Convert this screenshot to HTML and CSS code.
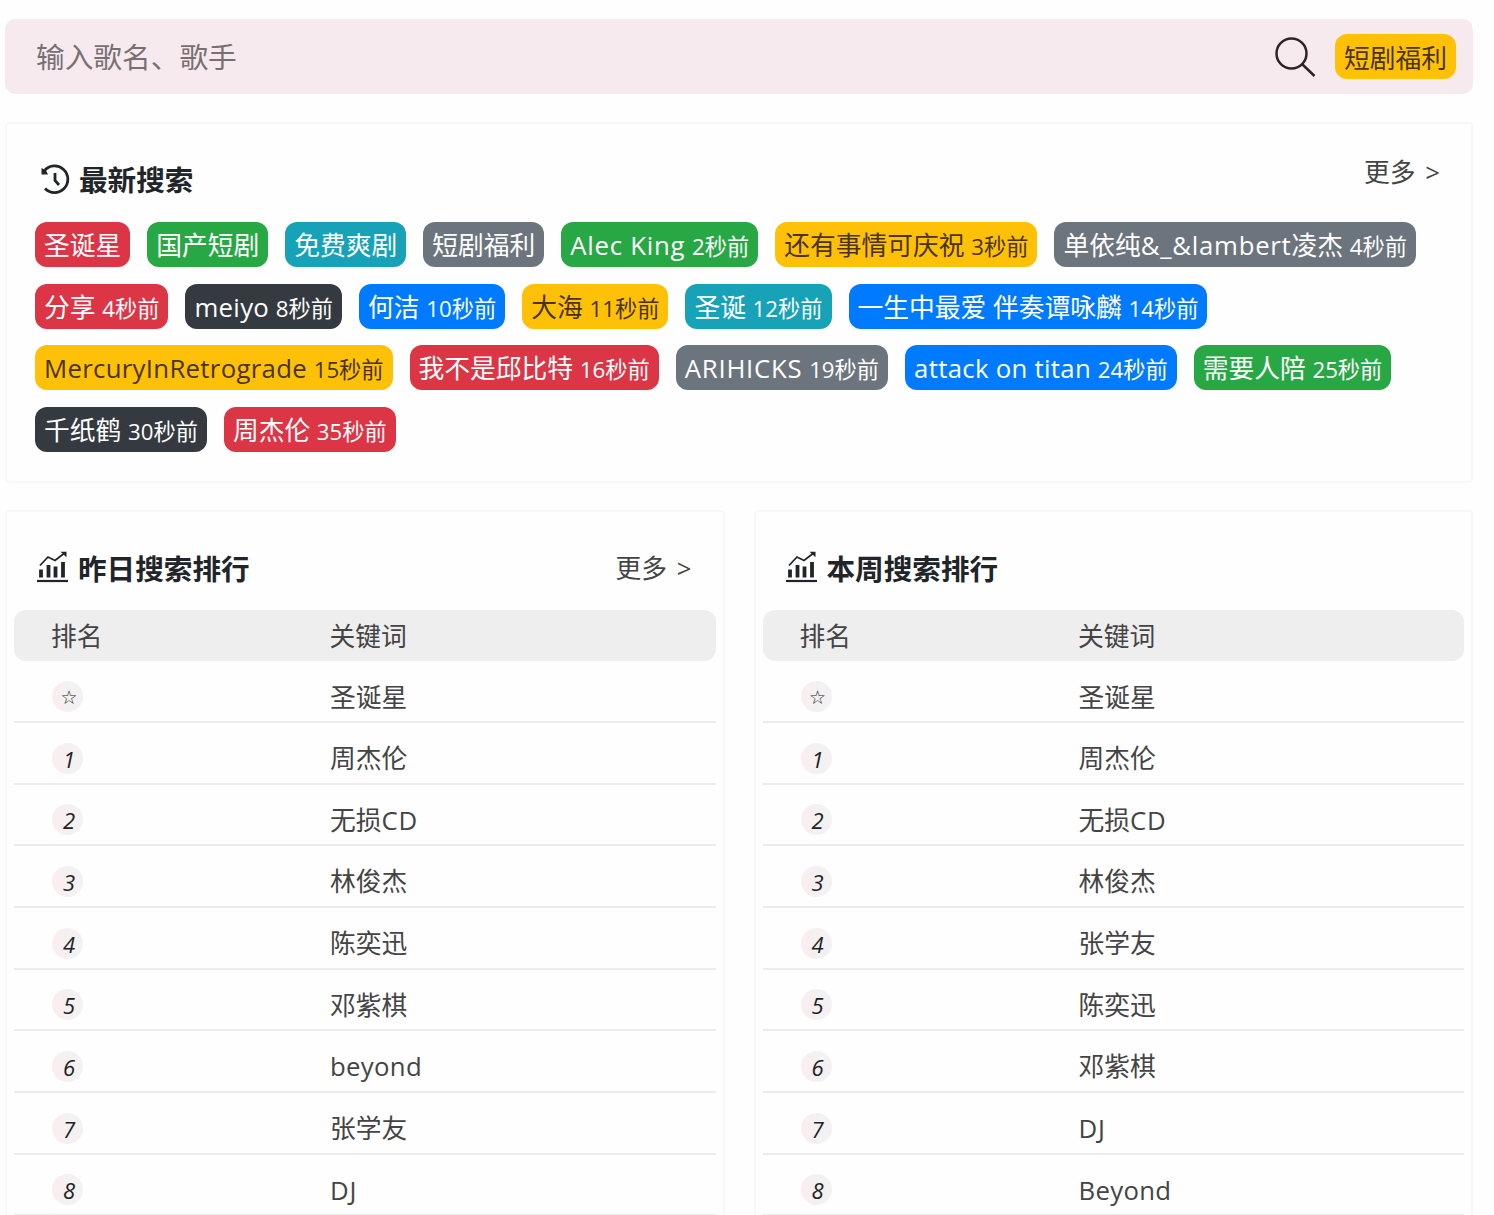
FILE: index.html
```html
<!DOCTYPE html>
<html lang="zh-CN">

<head>
  <meta charset="UTF-8" />
  <meta name="viewport" content="width=device-width, initial-scale=1.0" />
  <title>歌曲搜索</title>
  <link rel="stylesheet" href="styles.css">
</head>

<body>
  <svg class="sprite">
    <symbol id="icon-chart" viewBox="0 0 32 32">
      <path d="M0 30h31" stroke="currentColor" stroke-width="2.200" fill="none" />
      <path d="M4 18.500v8M11.500 14v12.500M18.500 15.500v11M26 11v15.500" stroke="currentColor" stroke-width="3.800" fill="none" />
      <path d="M3 14.500l8-8.500 7 3.500L27 2.500" stroke="currentColor" stroke-width="1.800" fill="none" />
      <path d="M23.500 0.700h6v5.500z" fill="currentColor" />
    </symbol>
  </svg>

  <form class="search">
    <input class="search-input" type="text" placeholder="输入歌名、歌手">
    <svg class="search-icon" viewBox="0 0 42 42">
      <circle cx="17.500" cy="17.500" r="15" />
      <path d="M28 28l12.500 12" />
    </svg>
    <a class="tag warning">短剧福利</a>
  </form>

  <section class="card recent">
    <div class="card-head">
      <h2 class="title">
        <svg class="icon-history" viewBox="0 0 32 32">
          <path d="M5.500 7.500A13.300 13.300 0 1 1 6 25.500" />
          <path d="M16 10v7.500l4 4.500" />
          <path class="arrow" d="M2.500 5v6.500h6.500l-2-4z" />
        </svg>
        最新搜索
      </h2>
      <a class="more">更多 &gt;</a>
    </div>
    <div class="tags">
      <a class="tag danger">圣诞星</a>
      <a class="tag success">国产短剧</a>
      <a class="tag info">免费爽剧</a>
      <a class="tag secondary">短剧福利</a>
      <a class="tag success"><span class="wide">Alec King</span> <small>2秒前</small></a>
      <a class="tag warning">还有事情可庆祝 <small>3秒前</small></a>
      <a class="tag secondary">单依纯<span class="wide">&amp;_&amp;lambert</span>凌杰 <small>4秒前</small></a>
      <a class="tag danger">分享 <small>4秒前</small></a>
      <a class="tag dark"><span class="en">meiyo</span> <small>8秒前</small></a>
      <a class="tag primary">何洁 <small>10秒前</small></a>
      <a class="tag warning">大海 <small>11秒前</small></a>
      <a class="tag info">圣诞 <small>12秒前</small></a>
      <a class="tag primary">一生中最爱 伴奏谭咏麟 <small>14秒前</small></a>
      <a class="tag warning"><span class="en">MercuryInRetrograde</span> <small>15秒前</small></a>
      <a class="tag danger">我不是邱比特 <small>16秒前</small></a>
      <a class="tag secondary"><span class="wide">ARIHICKS</span> <small>19秒前</small></a>
      <a class="tag primary"><span class="en">attack on titan</span> <small>24秒前</small></a>
      <a class="tag success">需要人陪 <small>25秒前</small></a>
      <a class="tag dark">千纸鹤 <small>30秒前</small></a>
      <a class="tag danger">周杰伦 <small>35秒前</small></a>
    </div>
  </section>

  <div class="ranks">
    <section class="card rank">
      <div class="card-head">
        <h2 class="title"><svg class="icon-chart"><use href="#icon-chart" /></svg>昨日搜索排行</h2>
        <a class="more">更多 &gt;</a>
      </div>
      <div class="row head"><span>排名</span><span>关键词</span></div>
      <div class="row"><i class="num star">☆</i><span>圣诞星</span></div>
      <div class="row"><i class="num">1</i><span>周杰伦</span></div>
      <div class="row"><i class="num">2</i><span>无损<span class="wide">CD</span></span></div>
      <div class="row"><i class="num">3</i><span>林俊杰</span></div>
      <div class="row"><i class="num">4</i><span>陈奕迅</span></div>
      <div class="row"><i class="num">5</i><span>邓紫棋</span></div>
      <div class="row"><i class="num">6</i><span class="en">beyond</span></div>
      <div class="row"><i class="num">7</i><span>张学友</span></div>
      <div class="row"><i class="num">8</i><span class="wide">DJ</span></div>
    </section>

    <section class="card rank">
      <div class="card-head">
        <h2 class="title"><svg class="icon-chart"><use href="#icon-chart" /></svg>本周搜索排行</h2>
      </div>
      <div class="row head"><span>排名</span><span>关键词</span></div>
      <div class="row"><i class="num star">☆</i><span>圣诞星</span></div>
      <div class="row"><i class="num">1</i><span>周杰伦</span></div>
      <div class="row"><i class="num">2</i><span>无损<span class="wide">CD</span></span></div>
      <div class="row"><i class="num">3</i><span>林俊杰</span></div>
      <div class="row"><i class="num">4</i><span>张学友</span></div>
      <div class="row"><i class="num">5</i><span>陈奕迅</span></div>
      <div class="row"><i class="num">6</i><span>邓紫棋</span></div>
      <div class="row"><i class="num">7</i><span class="wide">DJ</span></div>
      <div class="row"><i class="num">8</i><span class="en">Beyond</span></div>
    </section>
  </div>
</body>

</html>
```
FILE: styles.css
```css
* {
  box-sizing: border-box;
  margin: 0;
  padding: 0;
}

body {
  height: 1215px;
  padding: 19px 21px 0 5px;
  overflow: hidden;
  background: #fefefe;
  color: #444;
  font-family: "Open Sans", "Noto Sans CJK SC", sans-serif;
  font-size: 25.75px;
  line-height: 36px;
}

.sprite {
  display: none;
}

.en {
  letter-spacing: 0.3px;
}

.wide {
  letter-spacing: 0.75px;
}

/* 搜索框 */
.search {
  display: flex;
  align-items: center;
  height: 75px;
  padding: 0 17px 0 31px;
  border-radius: 10px;
  background: #f7eaef;
}

.search-input {
  flex: 1;
  min-width: 0;
  height: 60px;
  border: none;
  outline: none;
  background: none;
  font-family: inherit;
  font-size: 28.7px;
}

.search-input::placeholder {
  color: #777073;
}

.search-icon {
  width: 42px;
  height: 42px;
  margin-right: 19px;
  fill: none;
  stroke: #2b2529;
  stroke-width: 2.5;
}

.search .tag {
  padding-top: 2px;
}

/* 卡片 */
.card {
  border: 2px solid #f8f8f8;
  border-radius: 4px;
  background: #fefefe;
}

.card-head {
  display: flex;
  justify-content: space-between;
}

.title {
  display: flex;
  align-items: center;
  color: #212529;
  font-size: 28.6px;
  font-weight: 700;
}

.recent {
  height: 361px;
  margin-top: 28px;
  padding: 30px 31px 0 28px;
}

.recent .title {
  margin-top: 8px;
}

.icon-history {
  width: 32px;
  height: 32px;
  margin: -2px 8px 0 4px;
  fill: none;
  stroke: #212529;
  stroke-width: 2.8;
}

.icon-history .arrow {
  fill: #212529;
  stroke: none;
}

.icon-chart {
  width: 32px;
  height: 32px;
  margin: -5px 9px 0 -1px;
}

.more {
  word-spacing: 3px;
  white-space: nowrap;
}

/* 标签 */
.tags {
  display: flex;
  flex-wrap: wrap;
  gap: 16.6px 17px;
  margin: 24px -16px 0 0;
}

.tag {
  height: 45px;
  padding: 1px 9px 0;
  border-radius: 12px;
  color: #fff;
  line-height: 45px;
  white-space: nowrap;
}

.tag small {
  font-size: 22.25px;
}

.primary {
  background: #007bff;
}

.secondary {
  background: #6c757d;
}

.success {
  background: #28a745;
}

.danger {
  background: #dc3545;
}

.warning {
  background: #ffc107;
  color: #4a3310;
}

.info {
  background: #17a2b8;
}

.dark {
  background: #343a40;
}

/* 排行榜 */
.ranks {
  display: flex;
  gap: 29px;
  margin-top: 27px;
}

.rank {
  flex: 1;
  height: 760px;
  padding: 38px 7px 0;
}

.rank .card-head {
  height: 60px;
  padding: 0 24px;
}

.rank .title {
  height: 38px;
}

.row {
  display: flex;
  align-items: center;
  height: 61.65px;
  padding: 10.5px 37px 0;
  border-bottom: 2px solid #ececec;
}

.row > :first-child {
  margin-right: 247px;
}

.row.head {
  height: 51px;
  margin-bottom: 0.5px;
  padding-top: 1px;
  border: none;
  border-radius: 12px;
  background: #eee;
}

.row.head > :first-child {
  margin-right: 227px;
}

.num {
  width: 31px;
  height: 31px;
  margin-left: 1px;
  padding-left: 3px;
  border-radius: 50%;
  background: linear-gradient(90deg, #fbedef, #f3f1f2 60%);
  color: #222;
  font-size: 22px;
  line-height: 32px;
  text-align: center;
}

.num.star {
  font-family: "DejaVu Sans", sans-serif;
  font-size: 19px;
}
```
